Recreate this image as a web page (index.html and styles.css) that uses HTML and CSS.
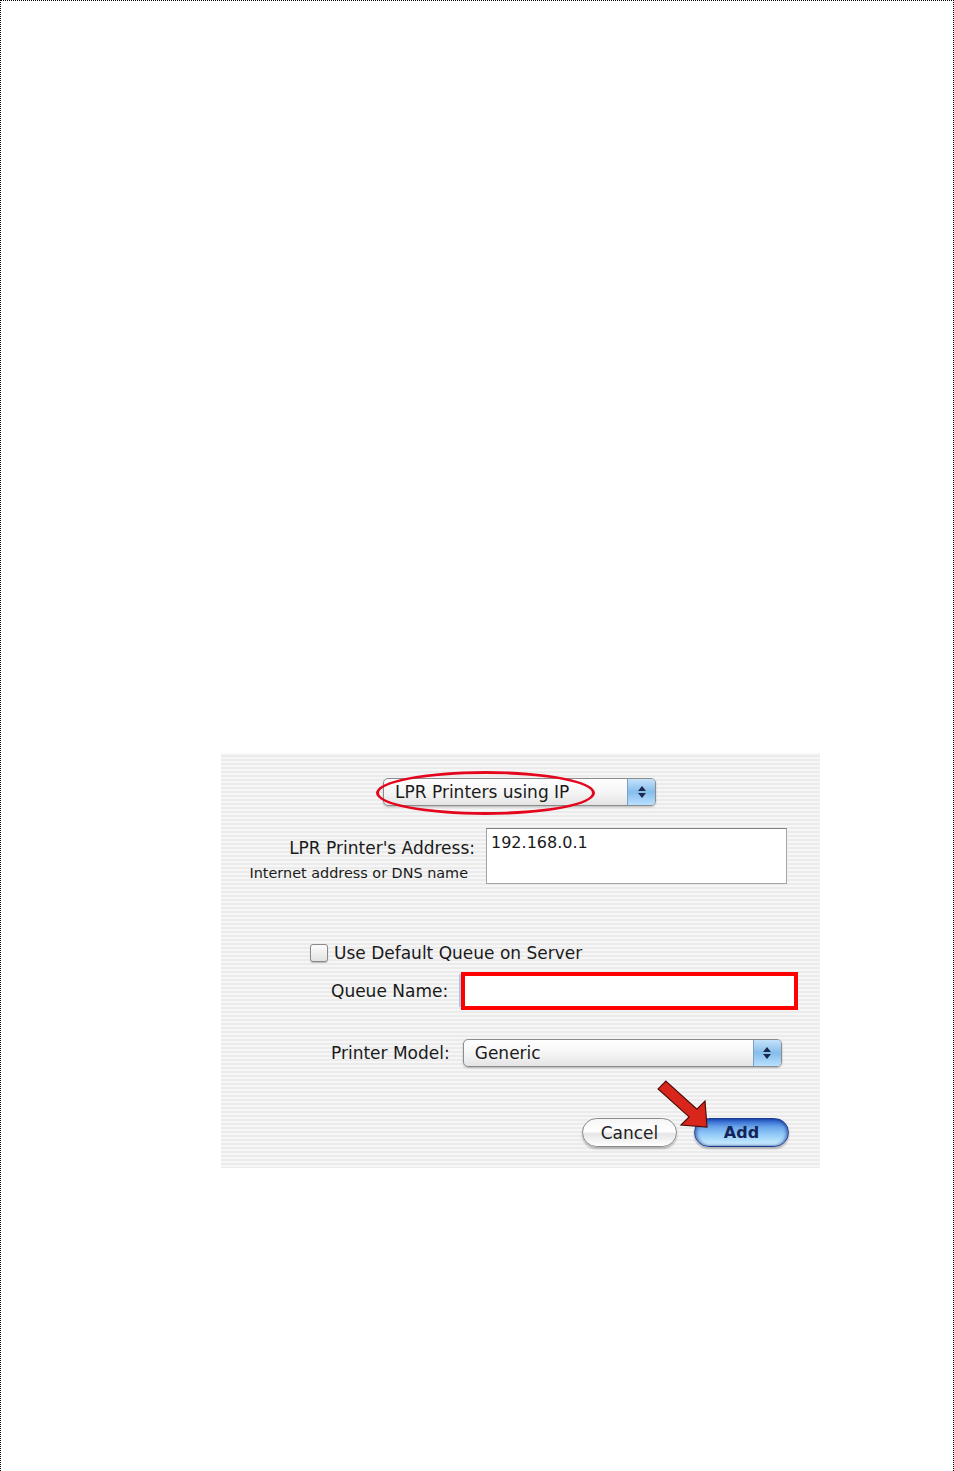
FILE: index.html
```html
<!DOCTYPE html>
<html lang="en">
<head>
    <meta charset="UTF-8">
    <title>Add Printer - LPR</title>
    <link rel="stylesheet" href="styles.css">
</head>
<body>

    <div class="page">

        <div class="dialog">

            <div class="row popup-row">
                <div class="popup popup-type">
                    <span class="popup-text">LPR Printers using IP</span>
                    <span class="popup-arrows">
                        <svg width="10" height="14" viewBox="0 0 10 14"><path d="M5 1 L9 6 L1 6 Z M5 13 L9 8 L1 8 Z" fill="#1b2a4a"/></svg>
                    </span>
                </div>
            </div>

            <div class="row address-row">
                <div class="address-label">
                    <div class="label-main">LPR Printer's Address:</div>
                    <div class="label-small">Internet address or DNS name</div>
                </div>
                <div class="textbox">192.168.0.1</div>
            </div>

            <div class="row check-row">
                <span class="checkbox"></span>
                <span class="label-main">Use Default Queue on Server</span>
            </div>

            <div class="row queue-row">
                <span class="label-main">Queue Name:</span>
                <div class="queue-input"></div>
            </div>

            <div class="row model-row">
                <span class="label-main">Printer Model:</span>
                <div class="popup popup-model">
                    <span class="popup-text">Generic</span>
                    <span class="popup-arrows">
                        <svg width="10" height="14" viewBox="0 0 10 14"><path d="M5 1 L9 6 L1 6 Z M5 13 L9 8 L1 8 Z" fill="#1b2a4a"/></svg>
                    </span>
                </div>
            </div>

            <div class="row button-row">
                <button class="btn btn-cancel">Cancel</button>
                <button class="btn btn-add">Add</button>
            </div>

            <!-- annotations drawn over the screenshot -->
            <div class="mark-ellipse"></div>
            <div class="mark-box"></div>
            <svg class="mark-arrow" width="62" height="60" viewBox="0 0 62 60">
                <polygon points="14.9,8.1 45.9,36.1 54,28 56,54 30,52 38.1,43.9 7.1,15.9" fill="#d8261d" stroke="#4a0d08" stroke-width="1.2" stroke-linejoin="miter"/>
            </svg>

        </div>

    </div>

</body>
</html>
```

FILE: styles.css
```css
html, body {
    margin: 0;
    padding: 0;
    background: #fff;
}
.page {
    width: 954px;
    height: 1471px;
    box-sizing: border-box;
    border-top: 1px dotted #000;
    border-left: 1px dotted #000;
    border-right: 1px dotted #000;
    padding-top: 752px;
    padding-left: 220px;
}
.dialog {
    position: relative;
    width: 599px;
    height: 415px;
    box-sizing: border-box;
    background: repeating-linear-gradient(#f6f6f6 0 2px, #ebebeb 2px 4px);
    font-family: "DejaVu Sans", sans-serif;
    color: #1a1a1a;
}
.row {
    display: flex;
    align-items: center;
}
.label-main {
    font-size: 17px;
    line-height: 20px;
    white-space: nowrap;
}
.label-small {
    font-size: 14.4px;
    line-height: 18px;
    white-space: nowrap;
}

/* popup menus */
.popup {
    display: flex;
    align-items: center;
    height: 28px;
    box-sizing: border-box;
    border: 1px solid #8c8c8c;
    border-radius: 5px;
    background: linear-gradient(#ffffff, #f4f4f4 55%, #e4e4e4);
    box-shadow: 0 1px 2px rgba(0, 0, 0, 0.25);
    overflow: hidden;
}
.popup-text {
    flex: 1;
    font-size: 17px;
    line-height: 20px;
    padding-left: 11px;
    white-space: nowrap;
}
.popup-arrows {
    width: 27px;
    height: 100%;
    display: flex;
    align-items: center;
    justify-content: center;
    border-left: 1px solid #7f9fc4;
    background: linear-gradient(#c4e2fb, #86bdeb 50%, #b9e0ff);
}
.popup-row {
    padding-top: 25px;
    padding-left: 162px;
}
.popup-type {
    width: 273px;
}

/* address */
.address-row {
    margin-top: 22px;
    align-items: flex-start;
}
.address-label {
    width: 254px;
    text-align: right;
    padding-top: 10px;
}
.address-label .label-small {
    margin-top: 6px;
    padding-right: 7px;
}
.textbox {
    margin-left: 11px;
    width: 301px;
    height: 56px;
    box-sizing: border-box;
    background: #fff;
    border: 1px solid #a4a4a4;
    border-top-color: #808080;
    font-size: 16px;
    line-height: 18px;
    padding: 5px 0 0 4px;
}

/* checkbox */
.check-row {
    margin-top: 59px;
    padding-left: 89px;
    height: 20px;
}
.checkbox {
    width: 18px;
    height: 18px;
    box-sizing: border-box;
    border: 1px solid #8a8a8a;
    border-radius: 3px;
    background: linear-gradient(#fdfdfd, #e2e2e2);
    box-shadow: 0 1px 1px rgba(0, 0, 0, 0.25);
    margin-right: 6px;
}

/* queue name */
.queue-row {
    margin-top: 9px;
    padding-left: 110px;
    height: 37px;
}
.queue-input {
    margin-left: 11px;
    width: 339px;
    height: 33px;
    background: #fff;
    border-left: 3px solid #a9c8ea;
    box-sizing: border-box;
}

/* printer model */
.model-row {
    margin-top: 30px;
    padding-left: 110px;
}
.popup-model {
    margin-left: 13px;
    width: 319px;
}

/* buttons */
.button-row {
    margin-top: 51px;
    justify-content: flex-end;
    padding-right: 31px;
    gap: 17px;
}
.btn {
    width: 95px;
    height: 29px;
    border-radius: 15px;
    font-family: "DejaVu Sans", sans-serif;
    font-size: 17px;
    padding: 0;
    box-shadow: 0 2px 2px rgba(0, 0, 0, 0.25);
}
.btn-cancel {
    color: #222;
    border: 1px solid #8a8a8a;
    background: linear-gradient(#f6f6f6, #ffffff 45%, #e6e6e6 55%, #ffffff);
}
.btn-add {
    color: #13245a;
    font-weight: bold;
    font-size: 16px;
    border: 1px solid #1b3a8f;
    background: linear-gradient(#2458c8, #6aa6ea 30%, #8fc8f6 55%, #d2f2ff);
    box-shadow: 0 2px 2px rgba(0, 0, 0, 0.25), inset 2px 0 3px rgba(20, 50, 140, 0.5), inset -2px 0 3px rgba(20, 50, 140, 0.5);
}

/* red annotations */
.mark-ellipse {
    position: absolute;
    left: 155px;
    top: 18px;
    width: 219px;
    height: 44px;
    box-sizing: border-box;
    border: 3px solid #e4061c;
    border-radius: 50%;
}
.mark-box {
    position: absolute;
    left: 240px;
    top: 219px;
    width: 337px;
    height: 38px;
    box-sizing: border-box;
    border: 4px solid #ff0000;
}
.mark-arrow {
    position: absolute;
    left: 430px;
    top: 320px;
}
```
